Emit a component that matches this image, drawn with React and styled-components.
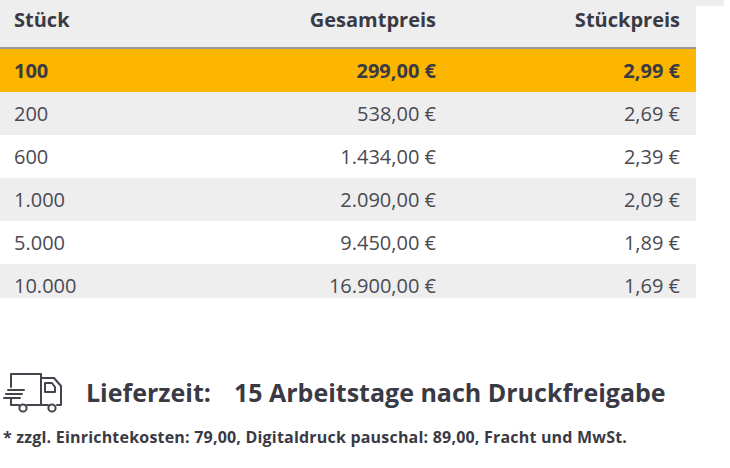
import React from "react";
import styled, { createGlobalStyle } from "styled-components";

const Global = createGlobalStyle`
  html, body { margin: 0; padding: 0; background: #fff; }
  body { font-family: "Open Sans", "Liberation Sans", sans-serif; color: #3b3b45; }
`;

const Page = styled.div`
  width: 730px;
  height: 468px;
  overflow: hidden;
  display: flex;
  flex-direction: column;
`;

const Top = styled.div`
  display: flex;
  align-items: flex-start;
`;

const Strip = styled.div`
  width: 28px;
  height: 6px;
  background: #eeeeee;
`;

const Table = styled.div`
  width: 696px;
  height: 298px;
  overflow: hidden;
  display: flex;
  flex-direction: column;
`;

const Row = styled.div`
  display: grid;
  grid-template-columns: 1fr 260px 244px;
  align-items: center;
  flex: none;
  height: ${(p) => (p.$head ? "47px" : "43px")};
  background: ${(p) => (p.$hl ? "#fdb600" : p.$alt ? "#eeeeee" : "#ffffff")};
  border-bottom: ${(p) => (p.$head ? "2px solid #9a9a9a" : "none")};
  font-size: 20px;
  font-weight: ${(p) => (p.$bold ? 700 : 400)};
  color: ${(p) => (p.$bold ? "#3a3a44" : "#4a4a54")};
`;

const Cell = styled.div`
  padding: ${(p) => (p.$right ? "0 16px 0 0" : "0 0 0 14px")};
  text-align: ${(p) => (p.$right ? "right" : "left")};
  white-space: nowrap;
  line-height: 1;
  position: relative;
  top: ${(p) => (p.$head ? "-4px" : "0")};
`;

const Delivery = styled.div`
  display: flex;
  align-items: center;
  margin-top: 72px;
  padding-left: 2px;
  height: 44px;
`;

const Label = styled.span`
  font-size: 25px;
  font-weight: 700;
  color: #3a3a44;
  margin-left: 22px;
`;

const Value = styled.span`
  font-size: 25px;
  font-weight: 700;
  color: #3a3a44;
  margin-left: 23px;
`;

const Note = styled.div`
  font-size: 16px;
  font-weight: 700;
  color: #3a3a44;
  padding-left: 3px;
  margin-top: 12px;
  letter-spacing: 0.2px;
  white-space: nowrap;
`;

const Truck = () => (
  <svg width="62" height="44" viewBox="0 0 62 44" fill="none" stroke="#44444c" strokeWidth="2" strokeLinecap="round" strokeLinejoin="round">
    <path d="M9 17 V4 H39 V35" />
    <path d="M39 8 H52 L59 16 V35 H55" />
    <path d="M43 13 H50 L53 17 V22 H43 Z" />
    <path d="M25 35 H46" />
    <path d="M9 29 V35 H17" />
    <path d="M6 20 H22" />
    <path d="M4 24 H20" />
    <path d="M2 28 H18" />
    <circle cx="21" cy="38" r="3.6" />
    <circle cx="50" cy="38" r="3.6" />
  </svg>
);

const rows = [
  ["100", "299,00 €", "2,99 €"],
  ["200", "538,00 €", "2,69 €"],
  ["600", "1.434,00 €", "2,39 €"],
  ["1.000", "2.090,00 €", "2,09 €"],
  ["5.000", "9.450,00 €", "1,89 €"],
  ["10.000", "16.900,00 €", "1,69 €"],
];

export default function App() {
  return (
    <Page>
      <Global />
      <Top>
        <Table>
          <Row $head $alt $bold>
            <Cell $head>Stück</Cell>
            <Cell $head $right>Gesamtpreis</Cell>
            <Cell $head $right>Stückpreis</Cell>
          </Row>
          {rows.map((r, i) => (
            <Row key={r[0]} $hl={i === 0} $bold={i === 0} $alt={i % 2 === 1}>
              <Cell>{r[0]}</Cell>
              <Cell $right>{r[1]}</Cell>
              <Cell $right>{r[2]}</Cell>
            </Row>
          ))}
        </Table>
        <Strip />
      </Top>
      <Delivery>
        <Truck />
        <Label>Lieferzeit:</Label>
        <Value>15 Arbeitstage nach Druckfreigabe</Value>
      </Delivery>
      <Note>* zzgl. Einrichtekosten: 79,00, Digitaldruck pauschal: 89,00, Fracht und MwSt.</Note>
    </Page>
  );
}
